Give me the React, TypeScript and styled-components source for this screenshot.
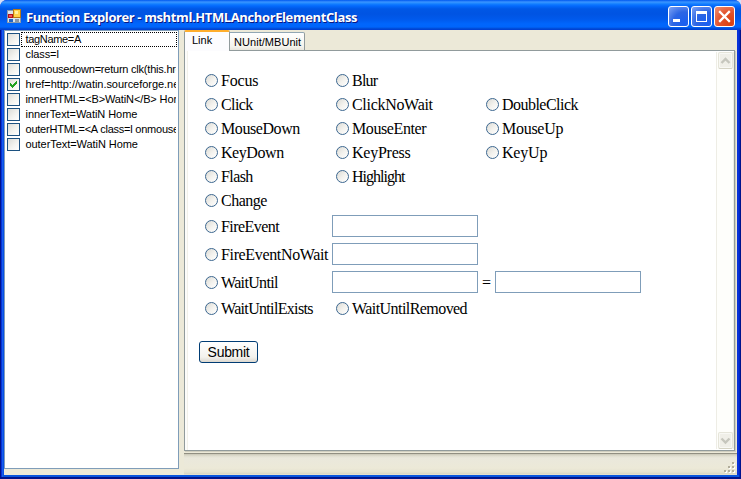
import React from 'react';
import styled, { createGlobalStyle } from 'styled-components';

const GlobalStyle = createGlobalStyle`
  * { box-sizing: border-box; }
  html, body { margin: 0; padding: 0; overflow: hidden; background: #d6dff7; }
`;

const Window = styled.div`
  display: flex;
  flex-direction: column;
  width: 741px;
  height: 479px;
  overflow: hidden;
  border-radius: 7px 7px 0 0;
  background: #0831d9;
  font-family: 'Liberation Sans', Arial, sans-serif;
  color: #000;
`;

const TitleBar = styled.header`
  display: flex;
  align-items: center;
  flex: 0 0 30px;
  padding: 3px 5px 0 7px;
  background: linear-gradient(
    to bottom,
    #0058ee 0,
    #3a93ff 2px,
    #288eff 3px,
    #127dff 4px,
    #0369fc 6px,
    #0057e5 9px,
    #0054e3 14px,
    #0059eb 19px,
    #0066fd 24px,
    #0065fb 27px,
    #0046d0 29px,
    #003dd7 30px
  );
`;

const TitleText = styled.h1`
  flex: 1;
  margin: 0 0 0 4px;
  font: bold 13px/20px 'Open Sans', 'Noto Sans', sans-serif;
  letter-spacing: -0.39px;
  white-space: nowrap;
  color: #fff;
  text-shadow: 1px 1px 0 #0a1883;
`;

const CaptionButtons = styled.div`
  display: flex;
  gap: 2px;
  margin-right: 1px;
`;

const CaptionButton = styled.button<{ $close?: boolean }>`
  width: 21px;
  height: 21px;
  padding: 0;
  border: 1px solid #fff;
  border-radius: 3px;
  background: ${(p) =>
    p.$close
      ? 'radial-gradient(circle at 80% 85%, #d8400f 0, #e2522c 50%, #ee9377 100%)'
      : 'radial-gradient(circle at 80% 85%, #1a5ff0 0, #2c65e4 50%, #7fa4f5 100%)'};
  svg { display: block; }
`;

const Frame = styled.div`
  display: flex;
  flex: 1;
  min-height: 0;
  border: solid;
  border-width: 0 4px 4px;
  border-color: #0a3fe0 #0831d9 #001ea0 #0a4fe8;
  background: #ece9d8;
  position: relative;
`;

const BorderShade = styled.div`
  position: absolute;
  inset: 0 -4px -4px;
  pointer-events: none;
  border: solid;
  border-width: 0 1px 2px;
  border-color: #00138c;
  box-shadow: inset 1px 0 0 #0831d9, inset 2px 0 0 #1660e8, inset -1px 0 0 #0029c5, inset 0 -2px 0 #0855dd;
  clip-path: polygon(0 0, 4px 0, 4px 445px, 737px 445px, 737px 0, 100% 0, 100% 100%, 0 100%);
`;

const AttributeList = styled.ul`
  flex: 0 0 175px;
  height: 439px;
  margin: 0;
  padding: 1px 1px 1px 2px;
  overflow: hidden;
  list-style: none;
  border: 1px solid #7f9db9;
  background: #fff;
`;

const AttributeRow = styled.li`
  display: flex;
  height: 15px;
`;

const CheckBox = styled.span`
  flex: 0 0 13px;
  height: 13px;
  margin-top: 1px;
  border: 1px solid #1c5180;
  background: linear-gradient(135deg, #dcdcd7 0, #f3f3ef 55%, #fff 100%);
  svg { display: block; }
`;

const AttributeText = styled.span<{ $focused?: boolean; $spacing: number }>`
  flex: 1;
  min-width: 0;
  height: 15px;
  margin-left: 1px;
  padding-left: 3.5px;
  overflow: hidden;
  white-space: nowrap;
  font-size: 11px;
  line-height: 12px;
  letter-spacing: ${(p) => p.$spacing}px;
  border: 1px ${(p) => (p.$focused ? 'dotted #000' : 'solid transparent')};
`;

const Main = styled.main`
  display: flex;
  flex-direction: column;
  width: 553px;
  margin-left: 5px;
`;

const TabStrip = styled.nav`
  display: flex;
  align-items: flex-end;
  height: 20px;
`;

const Tab = styled.div<{ $active?: boolean }>`
  z-index: ${(p) => (p.$active ? 1 : 0)};
  width: ${(p) => (p.$active ? 46 : 75)}px;
  height: ${(p) => (p.$active ? 21 : 18)}px;
  margin-bottom: ${(p) => (p.$active ? -1 : 0)}px;
  padding-left: ${(p) => (p.$active ? 7 : 4)}px;
  white-space: nowrap;
  font-size: 11px;
  line-height: ${(p) => (p.$active ? 17 : 18)}px;
  letter-spacing: ${(p) => (p.$active ? 0 : 0.05)}px;
  border: 1px solid #919b9c;
  border-bottom: 0;
  border-left-width: ${(p) => (p.$active ? 1 : 0)}px;
  border-top: ${(p) => (p.$active ? '2px solid #ffae2c' : '1px solid #91a7b4')};
  border-radius: ${(p) => (p.$active ? '2px 2px 0 0' : '0 2px 0 0')};
  background: ${(p) => (p.$active ? '#fcfcfe' : 'linear-gradient(#fff, #f4f3ec 80%, #e8e6dc)')};
`;

const Page = styled.section`
  display: flex;
  width: 551px;
  height: 401px;
  padding: 1px 0 1px 0;
  border: 1px solid #919b9c;
  background: #fff;
  box-shadow: 1px 1px 0 #d0cebf, inset 2px 0 0 #fcfcfa, inset 3px 0 0 #f2f1ea;
`;

const Document = styled.form`
  flex: 1;
  margin: 0;
  padding: 17px 0 0 16px;
  font: 16px/24px 'Liberation Serif', 'Times New Roman', serif;
`;

const ActionGrid = styled.div`
  display: grid;
  grid-template-columns: 131px 150px 170px;
  grid-template-rows: repeat(5, 24px) 23px repeat(3, 28px) 26px;
`;

const Cell = styled.div`
  display: flex;
  align-items: center;
  min-width: 0;
  white-space: nowrap;
`;

const RadioLabel = styled.label<{ $spacing: number; $lowered?: boolean }>`
  display: flex;
  align-items: center;
  margin-left: 4px;
  padding-top: ${(p) => (p.$lowered ? 2 : 0)}px;
  letter-spacing: ${(p) => p.$spacing}px;
`;

const RadioCircle = styled.span`
  width: 13px;
  height: 13px;
  margin: 0 3px 1px 0;
  border: 1px solid #3c6790;
  border-radius: 50%;
  background: linear-gradient(135deg, #dcdbd5 0, #f4f3ef 55%, #fff 100%);
`;

const TextBox = styled.input`
  width: 146px;
  height: 22px;
  flex: none;
  margin: 0;
  padding: 0 3px;
  border: 1px solid #7f9db9;
  border-radius: 0;
  background: #fff;
  outline: 0;
`;

const Equals = styled.span`
  width: 13px;
  padding-top: 2px;
`;

const SubmitButton = styled.button`
  display: block;
  width: 59px;
  height: 22px;
  margin: 19px 0 0 -2px;
  padding: 0 0 1px 0;
  font: 14px/18px 'Liberation Sans', Arial, sans-serif;
  letter-spacing: -0.3px;
  color: #000;
  border: 1px solid #003c74;
  border-radius: 3px;
  background: linear-gradient(#fff, #f3f2ed 75%, #dcd8cf);
`;

const ScrollBar = styled.div`
  display: flex;
  flex-direction: column;
  justify-content: space-between;
  align-items: center;
  width: 18px;
  height: 397px;
  border-left: 1px solid #eeede5;
  border-right: 1px solid #eeede5;
  background: #fefefb;
`;

const ScrollButton = styled.div`
  display: grid;
  place-items: center;
  width: 15px;
  height: 17px;
  border: 1px solid #e6e5da;
  border-bottom-color: #d5d3c4;
  border-radius: 2px;
  background: #f0efe8;
  box-shadow: inset 0 0 0 1px #f8f8f4;
`;

const StatusBar = styled.footer`
  display: flex;
  justify-content: flex-end;
  align-items: flex-end;
  flex: 1;
  margin-top: 2px;
  padding: 0 1px 1px;
  border-top: 1px solid #918f82;
  background: linear-gradient(#c9c6b6 0, #e0decf 2px, #eae8dc 4px, #ece9d8 14px, #e5e2d0 18px, #d8d4c2 20px, #ece9d8 21px);
`;

const AppIcon = () => (
  <svg width="15" height="15" viewBox="0 0 15 15" shapeRendering="crispEdges">
    <rect x="0.5" y="1.5" width="13" height="12" fill="#dbe4ee" stroke="#8d9baa" />
    <rect x="1" y="5" width="5" height="4" fill="#b3111e" />
    <rect x="2" y="6" width="3" height="2" fill="#ef5755" />
    <rect x="2" y="10" width="4" height="3" fill="#2365c4" />
    <rect x="6.5" y="0.5" width="7" height="8" fill="#ffd24b" stroke="#b97913" />
    <rect x="8" y="2" width="3" height="3" fill="#fff0a0" />
    <rect x="8" y="10" width="4" height="3" fill="#8995a4" />
  </svg>
);

const CheckMark = () => (
  <svg width="11" height="11" viewBox="0 0 11 11" shapeRendering="crispEdges">
    <path d="M2 4h1v1h1v1h1v-1h1v-1h1v-1h1v-1h1v3h-1v1h-1v1h-1v1h-1v1h-1v-1h-1v-1h-1z" fill="#21a121" />
  </svg>
);

const Arrow = ({ down }: { down?: boolean }) => (
  <svg width="11" height="8" viewBox="0 0 11 8">
    <path d={down ? 'M1.5 1.5 5.5 5.5 9.5 1.5' : 'M1.5 6 5.5 2 9.5 6'} fill="none" stroke="#c6c6bd" strokeWidth="2.4" />
  </svg>
);

const SizeGrip = () => (
  <svg width="12" height="12" viewBox="0 0 12 12" shapeRendering="crispEdges">
    {[[8, 0], [4, 4], [8, 4], [0, 8], [4, 8], [8, 8]].map(([x, y]) => (
      <g key={`${x}-${y}`}>
        <rect x={x + 1} y={y + 1} width="2" height="2" fill="#fff" />
        <rect x={x} y={y} width="2" height="2" fill="#b1ad9b" />
      </g>
    ))}
  </svg>
);

const attributes = [
  { text: 'tagName=A', focused: true, spacing: -0.33 },
  { text: 'class=l', spacing: -0.1 },
  { text: 'onmousedown=return clk(this.hre', spacing: -0.22 },
  { text: 'href=http://watin.sourceforge.ne', checked: true, spacing: -0.04 },
  { text: 'innerHTML=<B>WatiN</B> Hom', spacing: -0.12 },
  { text: 'innerText=WatiN Home', spacing: -0.06 },
  { text: 'outerHTML=<A class=l onmouse', spacing: -0.23 },
  { text: 'outerText=WatiN Home', spacing: -0.06 },
];

const labelSpacing: Record<string, number> = {
  Focus: -0.2,
  Click: -0.6,
  MouseDown: -0.42,
  KeyDown: -0.43,
  Flash: -0.6,
  Change: -0.5,
  FireEvent: -0.55,
  FireEventNoWait: -0.35,
  WaitUntil: -0.65,
  WaitUntilExists: -0.67,
  Blur: -0.75,
  ClickNoWait: -0.3,
  MouseEnter: -0.4,
  KeyPress: -0.25,
  Highlight: -1,
  WaitUntilRemoved: -0.56,
  DoubleClick: -0.53,
  MouseUp: -0.28,
  KeyUp: -0.2,
};

const Radio = ({ label, lowered }: { label: string; lowered?: boolean }) => (
  <RadioLabel $spacing={labelSpacing[label]} $lowered={lowered}>
    <RadioCircle />
    {label}
  </RadioLabel>
);

const plainRows = [
  ['Focus', 'Blur', ''],
  ['Click', 'ClickNoWait', 'DoubleClick'],
  ['MouseDown', 'MouseEnter', 'MouseUp'],
  ['KeyDown', 'KeyPress', 'KeyUp'],
  ['Flash', 'Highlight', ''],
  ['Change', '', ''],
];

export default function App() {
  return (
    <>
      <GlobalStyle />
      <Window>
        <TitleBar>
          <AppIcon />
          <TitleText>Function Explorer - mshtml.HTMLAnchorElementClass</TitleText>
          <CaptionButtons>
            <CaptionButton aria-label="Minimize">
              <svg width="19" height="19"><rect x="4" y="12" width="7" height="3" fill="#fff" /></svg>
            </CaptionButton>
            <CaptionButton aria-label="Maximize">
              <svg width="19" height="19"><path d="M4 4h11v11H4zM5 7v7h9V7z" fill="#fff" fillRule="evenodd" /></svg>
            </CaptionButton>
            <CaptionButton $close aria-label="Close">
              <svg width="19" height="19"><path d="m5 5 9 9m0-9-9 9" stroke="#fff" strokeWidth="2.3" strokeLinecap="square" /></svg>
            </CaptionButton>
          </CaptionButtons>
        </TitleBar>
        <Frame>
          <AttributeList>
            {attributes.map((a) => (
              <AttributeRow key={a.text}>
                <CheckBox>{a.checked && <CheckMark />}</CheckBox>
                <AttributeText $focused={a.focused} $spacing={a.spacing}>{a.text}</AttributeText>
              </AttributeRow>
            ))}
          </AttributeList>
          <Main>
            <TabStrip>
              <Tab $active>Link</Tab>
              <Tab>NUnit/MBUnit</Tab>
            </TabStrip>
            <Page>
              <Document>
                <ActionGrid>
                  {plainRows.flatMap((row, r) =>
                    row.map((label, c) => <Cell key={`${r}-${c}`}>{label && <Radio label={label} />}</Cell>),
                  )}
                  <Cell><Radio label="FireEvent" lowered /></Cell>
                  <Cell><TextBox /></Cell>
                  <Cell />
                  <Cell><Radio label="FireEventNoWait" lowered /></Cell>
                  <Cell><TextBox /></Cell>
                  <Cell />
                  <Cell><Radio label="WaitUntil" lowered /></Cell>
                  <Cell><TextBox /></Cell>
                  <Cell><Equals>=</Equals><TextBox /></Cell>
                  <Cell><Radio label="WaitUntilExists" /></Cell>
                  <Cell><Radio label="WaitUntilRemoved" /></Cell>
                  <Cell />
                </ActionGrid>
                <SubmitButton type="button">Submit</SubmitButton>
              </Document>
              <ScrollBar>
                <ScrollButton><Arrow /></ScrollButton>
                <ScrollButton><Arrow down /></ScrollButton>
              </ScrollBar>
            </Page>
            <StatusBar><SizeGrip /></StatusBar>
          </Main>
          <BorderShade />
        </Frame>
      </Window>
    </>
  );
}
